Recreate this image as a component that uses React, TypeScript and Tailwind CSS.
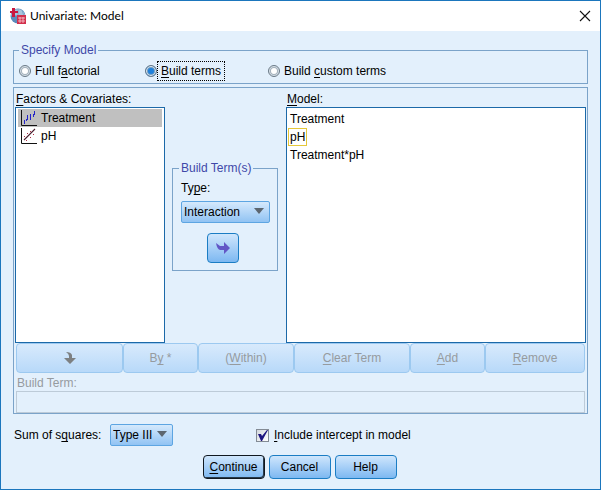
import type { ReactNode, SelectHTMLAttributes } from "react";

const toolButtons = [
  { key: "by", before: "B", hot: "y", after: " *" },
  { key: "within", before: "(", hot: "W", after: "ithin)" },
  { key: "clear", before: "", hot: "C", after: "lear Term" },
  { key: "add", before: "", hot: "A", after: "dd" },
  { key: "remove", before: "", hot: "R", after: "emove" },
];

const modelTerms = ["Treatment", "pH", "Treatment*pH"];

function Key({ children }: { children: ReactNode }) {
  return <span className="underline underline-offset-2">{children}</span>;
}

function AppLogo() {
  return (
    <svg width="17" height="17" viewBox="0 0 17 17" aria-hidden="true">
      <circle cx="9" cy="8" r="7.5" fill="#5b8bbb" />
      <path d="M4 3Q9 -1 14 3L16 7H2Z" fill="#a9c5dc" />
      <path d="M9 1v14M2 7.5h14M13 2q3 5 0 9" stroke="#7ba5cc" fill="none" />
      <path d="M1 3h2V0h3v3h3v2H6v4H3V5H1Z" fill="#c9183f" />
      <path d="M8 7h9v9H8Z" fill="#d22f4c" />
      <path d="M9 10h7M9 13h7M11 9v6M14 9v6" stroke="#f7ccd2" strokeWidth="0.8" />
    </svg>
  );
}

function FactorIcon() {
  return (
    <svg width="16" height="16" viewBox="0 0 16 16" aria-hidden="true" fill="none">
      <path d="M0.5 0v15.5H16" stroke="#111" />
      <path d="M3.5 10v4M6.5 5v5M5.5 9v2M9.5 4v6M13.5 1v4M12.5 4v3" stroke="#2323c8" />
    </svg>
  );
}

function CovariateIcon() {
  return (
    <svg width="16" height="16" viewBox="0 0 16 16" aria-hidden="true" fill="none">
      <path d="M0.5 0v15.5H16" stroke="#111" />
      <path d="M3 12L14 1" stroke="#4a2030" strokeWidth="1.1" />
      <path d="M3 8.5h1M6 5.5h1M9 3.5h1M5 12.5h1M9 9.5h1M12 6.5h1" stroke="#b03048" />
    </svg>
  );
}

function Dropdown({ className, children, ...props }: SelectHTMLAttributes<HTMLSelectElement>) {
  return (
    <div className={`relative ${className ?? ""}`}>
      <select
        {...props}
        className="block h-[22px] w-full appearance-none rounded-[2px] border border-[#5da5e2] bg-linear-to-b from-[#d5e9fc] to-[#91c3f3] pl-[2px] text-[12px]"
      >
        {children}
      </select>
      <svg
        className="pointer-events-none absolute top-[7px] right-[6px]"
        width="10"
        height="6"
        viewBox="0 0 10 6"
        aria-hidden="true"
      >
        <path d="M0 0h10L5 6Z" fill="#5c6670" />
      </svg>
    </div>
  );
}

function Radio({ id, checked, children }: { id: string; checked?: boolean; children: ReactNode }) {
  return (
    <div className="flex items-center">
      <input
        type="radio"
        id={id}
        name="specify"
        defaultChecked={checked}
        className="h-3 w-3 appearance-none rounded-full border border-[#687886] bg-white shadow-[inset_0_0_0_1px_#dce6ee,inset_0_0_0_2px_#a4b0bb] checked:bg-[#1d80dc] checked:shadow-[inset_0_0_0_1px_#e4eef6,inset_0_0_0_2px_#719dc4]"
      />
      <label
        htmlFor={id}
        className={`flex h-5 items-center border border-dotted px-[3px] ${
          checked ? "border-black" : "border-transparent"
        }`}
      >
        <span>{children}</span>
      </label>
    </div>
  );
}

export default function App() {
  return (
    <main className="flex min-h-screen flex-col border border-[#1b76bd] bg-[#e3f0fc] font-['Liberation_Sans',Arial,sans-serif] text-[12px] leading-4 text-black">
      <header className="flex h-[30px] items-center bg-white pr-[9px] pl-2">
        <AppLogo />
        <h1 className="ml-1 flex-1 font-[Lato,'Segoe_UI',sans-serif] text-[12px]">
          Univariate: Model
        </h1>
        <button type="button" aria-label="Close">
          <svg width="12" height="12" viewBox="0 0 12 12" aria-hidden="true">
            <path d="M1 1l10 10M11 1L1 11" stroke="#111" strokeWidth="1.1" />
          </svg>
        </button>
      </header>

      <form className="flex flex-1 flex-col px-3 pt-[11px] pb-[10px]">
        <fieldset className="border border-[#7ba3c9] pb-[2px]">
          <legend className="ml-[5px] px-[2px] text-[#3f48a8]">Specify Model</legend>
          <div className="grid grid-cols-[126px_123px_auto] pt-[3px] pl-[5px]">
            <Radio id="full">
              Full f<Key>a</Key>ctorial
            </Radio>
            <Radio id="build" checked>
              <Key>B</Key>uild terms
            </Radio>
            <Radio id="custom">
              Build <Key>c</Key>ustom terms
            </Radio>
          </div>
        </fieldset>

        <section className="mt-[3px] flex flex-1 flex-col border border-[#7ba3c9] px-px">
          <div className="flex flex-1">
            <div className="flex w-[150px] flex-col pt-[3px]">
              <h2 id="factors" className="pl-px">
                <Key>F</Key>actors &amp; Covariates:
              </h2>
              <ul
                role="listbox"
                aria-labelledby="factors"
                className="flex-1 border border-[#1c69a8] bg-white p-[2px] pt-px"
              >
                <li role="option" aria-selected="true" className="flex h-[18px] items-center gap-1 bg-[#c0c0c0] pl-[3px]">
                  <FactorIcon />
                  Treatment
                </li>
                <li role="option" aria-selected="false" className="flex h-[18px] items-center gap-1 pl-[3px]">
                  <CovariateIcon />
                  pH
                </li>
              </ul>
            </div>

            <div className="flex w-[121px] flex-col justify-center pl-[7px]">
              <fieldset className="w-[106px] border border-[#7ba3c9] pr-[7px] pb-[7px] pl-2">
                <legend className="-ml-[2px] px-[2px] text-[#3f48a8]">Build Term(s)</legend>
                <label htmlFor="type" className="mt-1 mb-[5px] block">
                  Ty<Key>p</Key>e:
                </label>
                <Dropdown id="type">
                  <option>Interaction</option>
                  <option>Main effects</option>
                </Dropdown>
                <button
                  type="button"
                  aria-label="Add to model"
                  className="mt-[10px] ml-[26px] flex h-[30px] w-8 items-center justify-center rounded-[4px] border border-[#1b7dc4] bg-linear-to-b from-[#cfe6fc] to-[#7db8f1]"
                >
                  <svg width="14" height="14" viewBox="0 0 14 14" aria-hidden="true">
                    <path d="M0 2l4 3h4V1l6 6-6 6V9H4Q1 8 0 2Z" fill="#6257c6" />
                  </svg>
                </button>
              </fieldset>
            </div>

            <div className="flex flex-1 flex-col pt-[3px]">
              <h2 id="model" className="pl-px">
                <Key>M</Key>odel:
              </h2>
              <ul
                role="listbox"
                aria-labelledby="model"
                className="flex-1 border border-[#1c69a8] bg-white pt-[2px] pl-px"
              >
                {modelTerms.map((term) => (
                  <li key={term} role="option" aria-selected={term === "pH"} className="flex h-[18px]">
                    <span
                      className={
                        term === "pH" ? "border border-[#e5c83a] px-px leading-4" : "px-[2px] leading-[18px]"
                      }
                    >
                      {term}
                    </span>
                  </li>
                ))}
              </ul>
            </div>
          </div>

          <div className="grid h-[30px] grid-cols-[107fr_75fr_96fr_116fr_75fr_100fr] px-px text-[#969b9f]">
            <button
              type="button"
              disabled
              aria-label="Move down"
              className="flex items-center justify-center rounded-[4px] border border-[#9cc9f0] bg-linear-to-b from-[#d8eafc] to-[#b8d9f9]"
            >
              <svg width="12" height="12" viewBox="0 0 12 12" aria-hidden="true">
                <path d="M2 0Q7 0 8 3v3h4l-6 6-6-6h5V4Q5 2 2 0Z" fill="#7d8082" />
              </svg>
            </button>
            {toolButtons.map((b) => (
              <button
                key={b.key}
                type="button"
                disabled
                className="rounded-[4px] border border-[#9cc9f0] bg-linear-to-b from-[#d8eafc] to-[#b8d9f9]"
              >
                {b.before}
                <Key>{b.hot}</Key>
                {b.after}
              </button>
            ))}
          </div>
          <label htmlFor="term" className="pt-[2px] pl-[2px] text-[#969b9f]">
            Build Term:
          </label>
          <input id="term" disabled className="mx-px h-[22px] border border-[#bdcbd8]" />
        </section>

        <div className="mt-[10px] grid grid-cols-[243px_auto] items-center">
          <div className="flex items-center">
            <label htmlFor="squares" className="w-[97px] pl-px">
              Sum of s<Key>q</Key>uares:
            </label>
            <Dropdown id="squares" className="w-[63px]">
              <option>Type III</option>
              <option>Type II</option>
              <option>Type I</option>
            </Dropdown>
          </div>
          <div className="flex items-center gap-[5px]">
            <span className="relative h-[13px] w-[13px]">
              <input
                type="checkbox"
                id="intercept"
                defaultChecked
                className="peer block h-[13px] w-[13px] appearance-none border border-[#838b95] bg-linear-to-br from-[#d3d8de] to-white"
              />
              <svg
                className="pointer-events-none absolute inset-0 hidden peer-checked:block"
                width="13"
                height="13"
                viewBox="0 0 13 13"
                aria-hidden="true"
              >
                <path d="M2 5h3l1 2 5-6h1L6 12H5Z" fill="#1d1580" />
              </svg>
            </span>
            <label htmlFor="intercept">
              <Key>I</Key>nclude intercept in model
            </label>
          </div>
        </div>

        <div className="mt-[9px] flex justify-center gap-1 pr-[2px]">
          <button
            type="button"
            className="h-6 w-[62px] rounded-[4px] border border-[#101820] bg-linear-to-b from-[#cfe6fc] to-[#7db8f1] shadow-[inset_-1px_-1px_0_#27394a]"
          >
            <Key>C</Key>ontinue
          </button>
          <button
            type="button"
            className="h-6 w-[62px] rounded-[4px] border border-[#1b7dc4] bg-linear-to-b from-[#cfe6fc] to-[#7db8f1]"
          >
            Cancel
          </button>
          <button
            type="button"
            className="h-6 w-[62px] rounded-[4px] border border-[#1b7dc4] bg-linear-to-b from-[#cfe6fc] to-[#7db8f1]"
          >
            Help
          </button>
        </div>
      </form>
    </main>
  );
}
